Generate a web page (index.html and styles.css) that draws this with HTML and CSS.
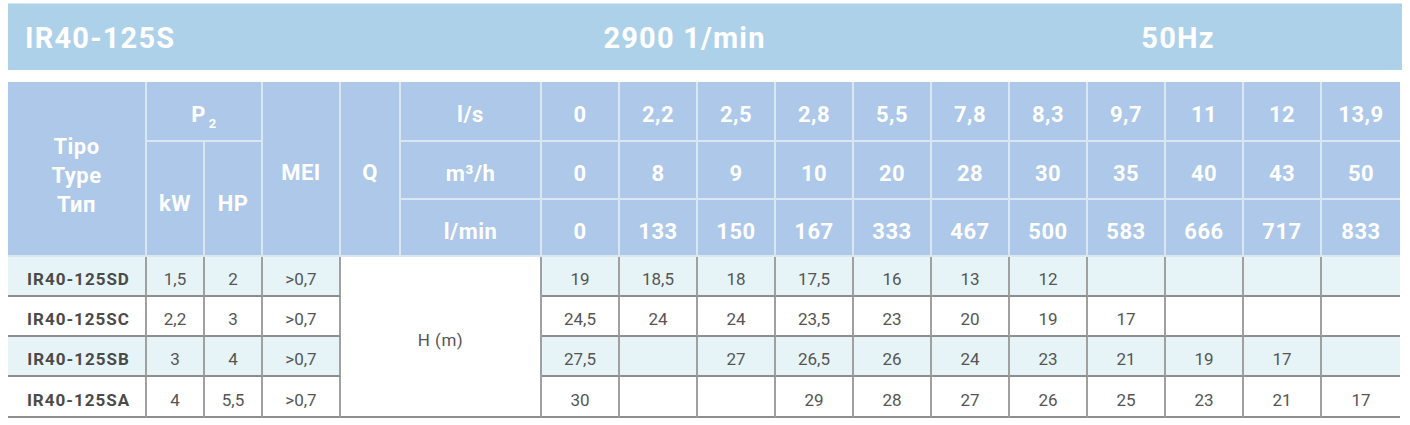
FILE: index.html
```html
<!DOCTYPE html>
<html lang="it">
<head>
<meta charset="utf-8">
<title>IR40-125S</title>
<link rel="stylesheet" href="styles.css">
</head>
<body>
<div class="titlebar">
  <div class="t-model">IR40-125S</div>
  <div class="t-speed">2900 1/min</div>
  <div class="t-freq">50Hz</div>
  <div></div>
</div>
<div class="grid">
  <div class="h span-r3 lines3">Tipo<br>Type<br>Тип</div>
  <div class="h span-c2"><span>P<sub>2</sub></span></div>
  <div class="h span-r3">MEI</div>
  <div class="h span-r3">Q</div>
  <div class="h">l/s</div>
  <div class="h">0</div><div class="h">2,2</div><div class="h">2,5</div><div class="h">2,8</div><div class="h">5,5</div><div class="h">7,8</div><div class="h">8,3</div><div class="h">9,7</div><div class="h">11</div><div class="h">12</div><div class="h last">13,9</div>

  <div class="h span-r2 low">kW</div>
  <div class="h span-r2 low">HP</div>
  <div class="h">m³/h</div>
  <div class="h">0</div><div class="h">8</div><div class="h">9</div><div class="h">10</div><div class="h">20</div><div class="h">28</div><div class="h">30</div><div class="h">35</div><div class="h">40</div><div class="h">43</div><div class="h last">50</div>

  <div class="h">l/min</div>
  <div class="h">0</div><div class="h">133</div><div class="h">150</div><div class="h">167</div><div class="h">333</div><div class="h">467</div><div class="h">500</div><div class="h">583</div><div class="h">666</div><div class="h">717</div><div class="h last">833</div>

  <div class="d a name">IR40-125SD</div><div class="d a">1,5</div><div class="d a">2</div><div class="d a">&gt;0,7</div>
  <div class="d hm">H (m)</div>
  <div class="d a">19</div><div class="d a">18,5</div><div class="d a">18</div><div class="d a">17,5</div><div class="d a">16</div><div class="d a">13</div><div class="d a">12</div><div class="d a"></div><div class="d a"></div><div class="d a"></div><div class="d a last"></div>

  <div class="d name">IR40-125SC</div><div class="d">2,2</div><div class="d">3</div><div class="d">&gt;0,7</div>
  <div class="d">24,5</div><div class="d">24</div><div class="d">24</div><div class="d">23,5</div><div class="d">23</div><div class="d">20</div><div class="d">19</div><div class="d">17</div><div class="d"></div><div class="d"></div><div class="d last"></div>

  <div class="d a name">IR40-125SB</div><div class="d a">3</div><div class="d a">4</div><div class="d a">&gt;0,7</div>
  <div class="d a">27,5</div><div class="d a"></div><div class="d a">27</div><div class="d a">26,5</div><div class="d a">26</div><div class="d a">24</div><div class="d a">23</div><div class="d a">21</div><div class="d a">19</div><div class="d a">17</div><div class="d a last"></div>

  <div class="d name">IR40-125SA</div><div class="d">4</div><div class="d">5,5</div><div class="d">&gt;0,7</div>
  <div class="d">30</div><div class="d"></div><div class="d"></div><div class="d">29</div><div class="d">28</div><div class="d">27</div><div class="d">26</div><div class="d">25</div><div class="d">23</div><div class="d">21</div><div class="d last">17</div>
</div>
</body>
</html>
```
FILE: styles.css
```css
* { box-sizing: border-box; }
html, body { background: #ffffff; }
body {
  margin: 0;
  padding: 3px 8px 0 8px;
  font-family: Roboto, "Liberation Sans", Arial, sans-serif;
}
.titlebar {
  width: 1394px;
  height: 67px;
  background: #aed1ea;
  border-top: 1px solid #d6e8f4;
  display: grid;
  grid-template-columns: 393px 567px 420px 1fr;
  align-items: center;
  color: #ffffff;
  font-weight: 700;
  font-size: 29px;
  letter-spacing: 1.2px;
}
.t-model { padding-left: 17px; padding-top: 2px; }
.t-speed, .t-freq { text-align: center; padding-top: 2px; }

.grid {
  margin-top: 12px;
  width: 1392px;
  display: grid;
  grid-template-columns: 139px 58px 58px 78px 60px 141px repeat(11, 78px);
  grid-template-rows: 60px 58px 57px 40px 40px 40px 41px;
}
.h {
  background: #adc8e8;
  color: #ffffff;
  font-weight: 700;
  font-size: 22px;
  letter-spacing: 0.5px;
  display: flex;
  align-items: center;
  justify-content: center;
  text-align: center;
  border-right: 2px solid #dbe6f3;
  border-bottom: 2px solid #dbe6f3;
  padding-top: 7px;
}
.h.last { border-right: none; }
.h sub { font-size: 13px; vertical-align: -6px; margin-left: 3px; line-height: 0; }
.span-r3 { grid-row: span 3; }
.span-r2 { grid-row: span 2; }
.span-c2 { grid-column: span 2; }
.lines3 { line-height: 29px; padding-top: 13px; }
.low { padding-top: 10px; }

.d {
  background: #ffffff;
  color: #555555;
  font-size: 17px;
  display: flex;
  align-items: center;
  justify-content: center;
  border-right: 2px solid #a0a0a0;
  border-bottom: 2px solid #8e8e8e;
  padding-top: 6px;
}
.d.a { background: #e6f4f8; }
.d.last { border-right: none; }
.d.name {
  font-weight: 700;
  color: #4a4a4a;
  letter-spacing: 1px;
  padding-left: 4px;
}
.d.hm {
  grid-column: span 2;
  grid-row: span 4;
  background: #ffffff;
  padding-top: 6px;
  letter-spacing: 0.5px;
}
```
